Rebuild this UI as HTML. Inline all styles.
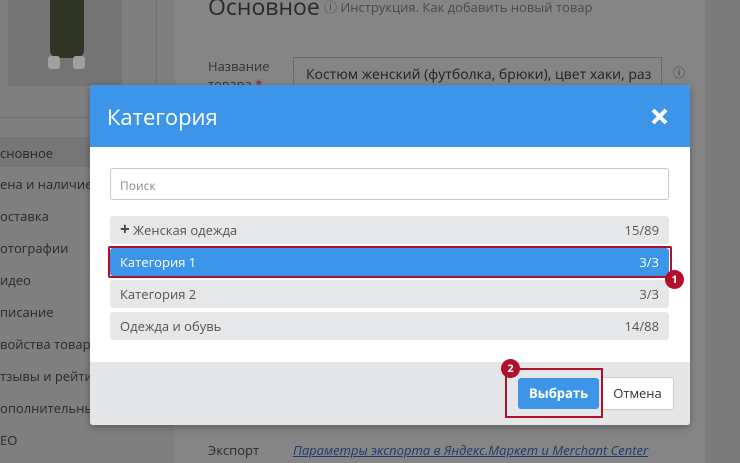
<!DOCTYPE html>
<html><head><meta charset="utf-8"><style>
*{margin:0;padding:0;box-sizing:border-box}
body{width:740px;height:463px;overflow:hidden;background:#858585;font-family:"Open Sans","Liberation Sans","DejaVu Sans",sans-serif;position:relative}
.abs{position:absolute}
.side{left:0;top:0;width:175px;height:463px;background:#7f7f7f}
.sideitem{left:0;width:175px;font-size:13px;color:#2a2a2a;white-space:nowrap;overflow:hidden}
.modal{left:90px;top:85px;width:600px;height:340px;background:#fff;box-shadow:0 2px 8px rgba(0,0,0,.3);border-radius:3px;overflow:hidden}
.hdr{left:0;top:0;width:600px;height:62px;background:#3d95e9;color:#fff;font-size:22px;padding:17px 0 0 17px}
.row{left:20px;width:559px;height:28px;background:#e6e7e9;border-radius:3px;font-size:13px;color:#555;padding:6px 10px;line-height:16px}
.row span{float:right}
</style></head><body>
<div class="abs side"></div>
<div class="abs" style="left:8px;top:0;width:114px;height:86px;background:#747474"></div>
<div class="abs" style="left:50px;top:0;width:34px;height:58px;background:#2f3424;border-radius:0 0 8px 8px"></div>
<div class="abs" style="left:48px;top:56px;width:12px;height:13px;background:#a0a0a0;border-radius:3px"></div>
<div class="abs" style="left:73px;top:56px;width:12px;height:13px;background:#a0a0a0;border-radius:3px"></div>
<div class="abs" style="left:156px;top:0;width:1px;height:118px;background:#707070"></div>
<div class="abs" style="left:0;top:117px;width:156px;height:1px;background:#707070"></div>
<div class="abs" style="left:0;top:137px;width:175px;height:30px;background:#767676"></div>
<div class="abs sideitem" style="top:144px">сновное</div>
<div class="abs sideitem" style="top:175px">ена и наличие</div>
<div class="abs sideitem" style="top:207px">оставка</div>
<div class="abs sideitem" style="top:239px">отографии</div>
<div class="abs sideitem" style="top:271px">идео</div>
<div class="abs sideitem" style="top:303px">писание</div>
<div class="abs sideitem" style="top:335px">войства товара</div>
<div class="abs sideitem" style="top:367px">тзывы и рейтинги</div>
<div class="abs sideitem" style="top:399px">ополнительные</div>
<div class="abs sideitem" style="top:431px">ЕО</div>
<div class="abs" style="left:705px;top:0;width:35px;height:463px;background:#7b7b7b"></div>
<div class="abs" style="left:208px;top:-10px;font-size:23px;color:#2a2a2a">Основное</div>
<div class="abs" style="left:324px;top:-3px;font-size:13px;color:#4a4a4a">ⓘ Инструкция. Как добавить новый товар</div>
<div class="abs" style="left:208px;top:57px;font-size:13px;color:#333;line-height:18px">Название<br>товара <span style="color:#8a2020">*</span></div>
<div class="abs" style="left:293px;top:57px;width:369px;height:34px;border:1px solid #6a6a6a;background:#858585;font-size:14px;color:#222;padding:7px 12px;white-space:nowrap;overflow:hidden">Костюм женский (футболка, брюки), цвет хаки, раз</div>
<div class="abs" style="left:673px;top:64px;font-size:12px;color:#333">ⓘ</div>
<div class="abs" style="left:208px;top:441px;font-size:13px;color:#2a2a2a">Экспорт</div>
<div class="abs" style="left:293px;top:441px;font-size:13px;color:#1f3a70;font-style:italic;text-decoration:underline">Параметры экспорта в Яндекс.Маркет и Merchant Center</div>

<div class="abs modal">
 <div class="abs hdr">Категория</div>
 <svg class="abs" style="left:561px;top:23px" width="17" height="17" viewBox="0 0 17 17"><path d="M2 2L15 15M15 2L2 15" stroke="#fff" stroke-width="4"/></svg>
 <div class="abs" style="left:20px;top:83px;width:559px;height:32px;border:1px solid #c8c8c8;border-radius:3px;font-size:12px;color:#888;padding:8px 9px">Поиск</div>
 <div class="abs row" style="top:131px"><b style="font-size:17px;color:#444;line-height:14px">+</b> Женская одежда<span>15/89</span></div>
 <div class="abs row" style="top:163px;background:#3d95e9;color:#fff">Категория 1<span>3/3</span></div>
 <div class="abs row" style="top:195px">Категория 2<span>3/3</span></div>
 <div class="abs row" style="top:227px">Одежда и обувь<span>14/88</span></div>
 <div class="abs" style="left:0;top:277px;width:600px;height:63px;background:#e5e6e8"></div>
 <div class="abs" style="left:428px;top:293px;width:81px;height:31px;background:#3d95e9;border-radius:3px;color:#fff;font-size:13px;font-weight:bold;text-align:center;line-height:31px">Выбрать</div>
 <div class="abs" style="left:511px;top:292px;width:73px;height:33px;background:#fff;border:1px solid #ccc;border-radius:3px;color:#333;font-size:13px;text-align:center;line-height:31px">Отмена</div>
</div>
<div class="abs" style="left:108px;top:246px;width:564px;height:32px;border:2px solid #b0102a;border-radius:2px"></div>
<div class="abs" style="left:665px;top:270px;width:19px;height:19px;border-radius:50%;background:#b0102a;color:#fff;font-size:11px;font-weight:bold;text-align:center;line-height:19px">1</div>
<div class="abs" style="left:505px;top:368px;width:98px;height:50px;border:2px solid #b0102a"></div>
<div class="abs" style="left:501px;top:359px;width:19px;height:19px;border-radius:50%;background:#b0102a;color:#fff;font-size:11px;font-weight:bold;text-align:center;line-height:19px">2</div>
</body></html>
